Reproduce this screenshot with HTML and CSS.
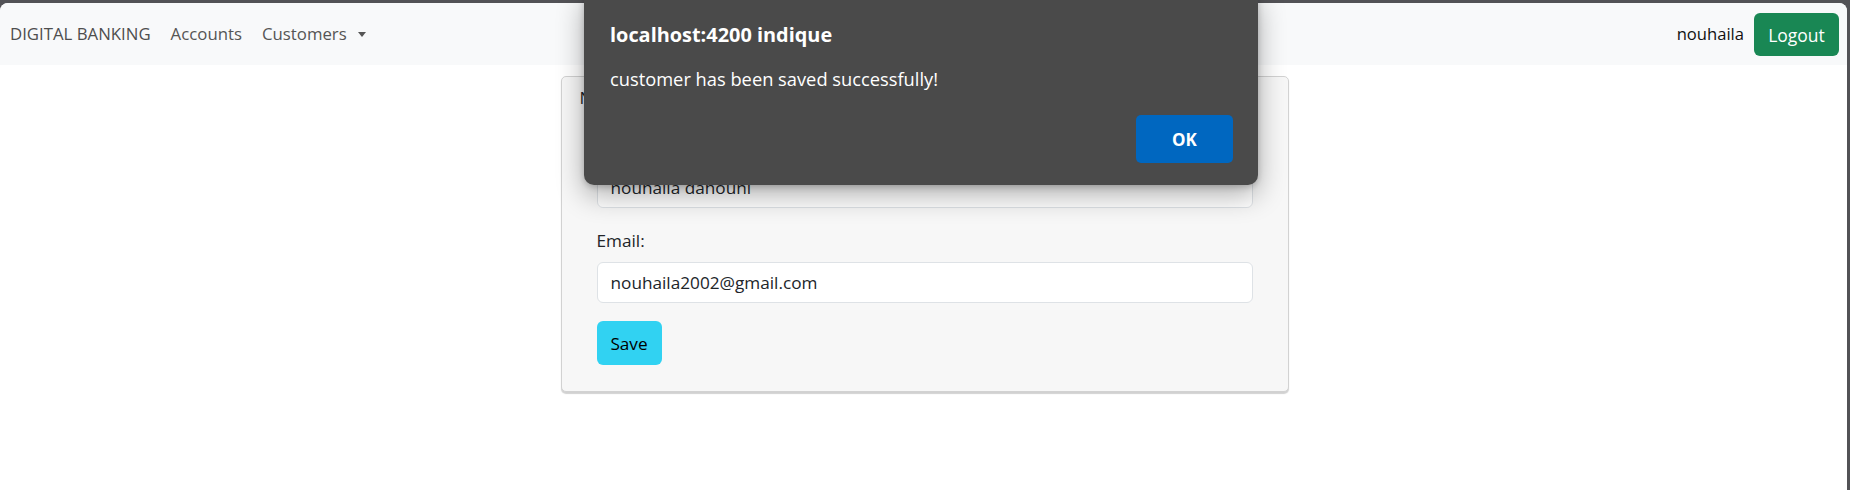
FILE: index.html
```html
<!DOCTYPE html>
<html>
<head>
<meta charset="utf-8">
<title>Digital Banking</title>
<link rel="stylesheet" href="styles.css">
</head>
<body>
<div class="page">
  <nav class="navbar">
    <div class="nav-left">
      <a class="brand">DIGITAL BANKING</a>
      <a class="nav-link">Accounts</a>
      <a class="nav-link dropdown-toggle">Customers</a>
    </div>
    <div class="nav-right">
      <span class="user">nouhaila</span>
      <button class="btn-logout">Logout</button>
    </div>
  </nav>

  <main class="content">
    <div class="card">
      <div class="card-header">New Customer</div>
      <form class="card-body">
        <div class="field">
          <label class="label">Name :</label>
          <input class="input" type="text" value="nouhaila dahouni">
        </div>
        <div class="field last">
          <label class="label">Email:</label>
          <input class="input" type="text" value="nouhaila2002@gmail.com">
        </div>
        <button class="btn-save" type="button">Save</button>
      </form>
    </div>
  </main>
</div>

<div class="dialog">
  <div class="dialog-title">localhost:4200 indique</div>
  <div class="dialog-msg">customer has been saved successfully!</div>
  <div class="dialog-actions">
    <button class="btn-ok">OK</button>
  </div>
</div>
</body>
</html>
```
FILE: styles.css
```css
* { box-sizing: border-box; }

html, body {
  margin: 0;
  padding: 0;
}

body {
  background: #525256;
  font-family: "Open Sans", "Noto Sans", sans-serif;
  width: 1850px;
  height: 490px;
  overflow: hidden;
  position: relative;
}

.page {
  margin: 3px 3px 0 0;
  height: 487px;
  background: #ffffff;
  border-radius: 8px 8px 0 0;
  overflow: hidden;
}

/* ---------- navbar ---------- */
.navbar {
  height: 62px;
  background: #f8f9fa;
  display: flex;
  align-items: center;
  justify-content: space-between;
  padding: 0 8px 0 10px;
}

.nav-left {
  display: flex;
  align-items: center;
  gap: 20px;
}

.brand, .nav-link {
  font-size: 16.8px;
  color: #555555;
  text-decoration: none;
  line-height: 1.362;
}

.brand { color: #4e4e4e; }

.dropdown-toggle {
  display: flex;
  align-items: center;
}

.dropdown-toggle::after {
  content: "";
  display: inline-block;
  margin-left: 11px;
  margin-top: 1px;
  border-top: 5px solid #555555;
  border-left: 4.5px solid transparent;
  border-right: 4.5px solid transparent;
}

.nav-right {
  display: flex;
  align-items: center;
  gap: 10px;
}

.user {
  font-size: 16.6px;
  color: #111111;
  line-height: 1.362;
}

.btn-logout {
  width: 85px;
  height: 43px;
  border: none;
  border-radius: 6px;
  background: #198754;
  color: #ffffff;
  font-family: "Open Sans", "Noto Sans", sans-serif;
  font-size: 17.5px;
  padding: 0;
  margin-top: 1px;
}

/* ---------- card ---------- */
.content {
  padding: 11px 0 0 2px;
}

.card {
  width: 728px;
  margin: 0 auto;
  background: #f7f7f7;
  border: 1px solid #d2d2d2;
  border-radius: 5px;
  box-shadow: 0 2px 1px rgba(0, 0, 0, 0.18);
}

.card-header {
  padding: 8px 18px 0;
  font-size: 17.2px;
  line-height: 25.8px;
  color: #212529;
}

.card-body {
  padding: 21px 35px 26px;
  margin: 0;
}

.field { margin-bottom: 20px; }
.field.last { margin-bottom: 18px; }

.label {
  display: block;
  font-size: 17.2px;
  line-height: 25.8px;
  color: #212529;
  margin-bottom: 9px;
}

.input {
  display: block;
  width: 100%;
  height: 41px;
  border: 1px solid #dee2e6;
  border-radius: 6px;
  background: #ffffff;
  padding: 0 13px;
  font-family: "Open Sans", "Noto Sans", sans-serif;
  font-size: 17.2px;
  color: #212529;
  outline: none;
}

.btn-save {
  display: block;
  width: 65px;
  height: 44px;
  border: none;
  border-radius: 6px;
  background: #31d2f2;
  color: #000000;
  font-family: "Open Sans", "Noto Sans", sans-serif;
  font-size: 17.2px;
  padding: 0;
}

/* ---------- alert dialog ---------- */
.dialog {
  position: absolute;
  left: 584px;
  top: -10px;
  width: 674px;
  height: 195px;
  background: #4a4a4a;
  border-radius: 10px;
  box-shadow: 0 10px 28px rgba(0, 0, 0, 0.32), 0 2px 6px rgba(0, 0, 0, 0.2);
  padding: 31px 25px 0 26px;
  color: #ffffff;
  display: flex;
  flex-direction: column;
}

.dialog-title {
  font-size: 19.9px;
  font-weight: 700;
  line-height: 27px;
}

.dialog-msg {
  font-size: 18.3px;
  line-height: 25px;
  margin-top: 18px;
}

.dialog-actions {
  display: flex;
  justify-content: flex-end;
  margin-top: 24px;
}

.btn-ok {
  width: 97px;
  height: 48px;
  border: none;
  border-radius: 5px;
  background: #0067c0;
  color: #ffffff;
  font-family: "Open Sans", "Noto Sans", sans-serif;
  font-size: 17px;
  font-weight: 700;
  padding: 0;
}
```
